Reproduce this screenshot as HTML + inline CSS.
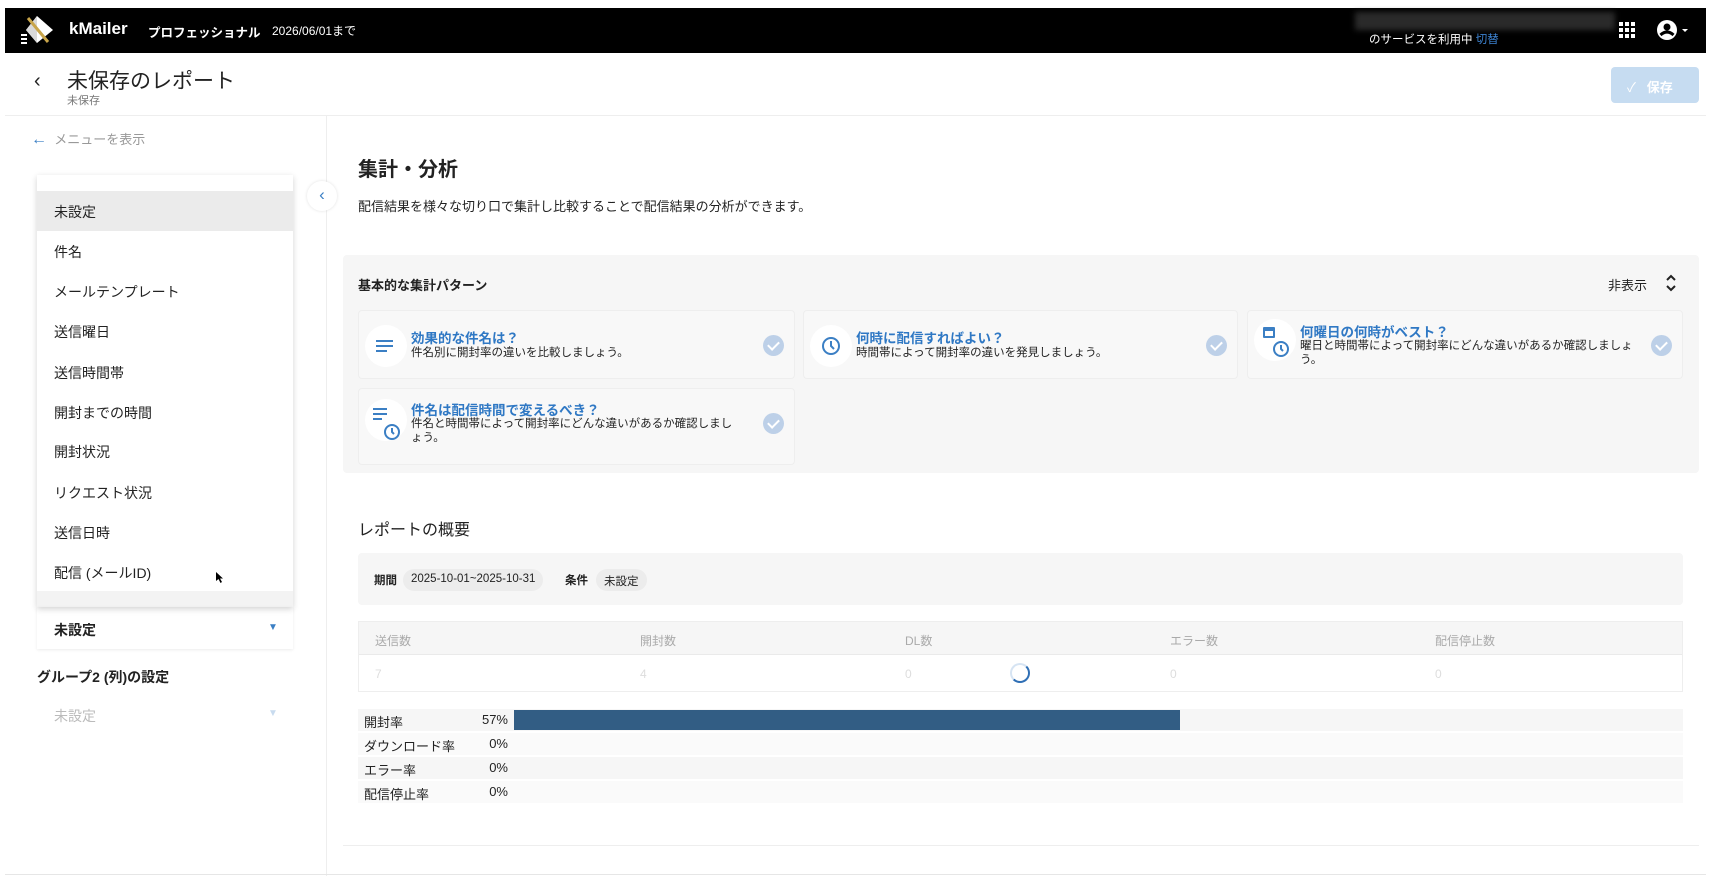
<!DOCTYPE html>
<html><head><meta charset="utf-8">
<style>
*{box-sizing:border-box;margin:0;padding:0}
body{width:1714px;height:880px;overflow:hidden;background:#fff;font-family:"Liberation Sans","Noto Sans CJK JP",sans-serif;color:#222;position:relative}
.a{position:absolute;white-space:nowrap}
.top{left:5px;top:8px;width:1701px;height:45px;background:#000}
.item{left:54px;font-size:14px;color:#222}
.card{background:#f8f8f8;border:1px solid #eee;border-radius:4px;position:absolute}
.ic{position:absolute;left:6px;top:14px;width:42px;height:42px;border-radius:50%;background:#fff}
.ct{position:absolute;left:52px;top:16px;font-size:13.5px;font-weight:bold;color:#2f78c4}
.cd{position:absolute;left:52px;top:35px;font-size:11.5px;color:#222;line-height:14px}
.chk{position:absolute;right:10px;top:24px;width:21px;height:21px;border-radius:50%;background:#bdd0e8}
.chk:after{content:"";position:absolute;left:7px;top:4px;width:5px;height:9px;border:solid #fff;border-width:0 2px 2px 0;transform:rotate(45deg)}
.th{font-size:12px;color:#aaa}
.row{position:absolute;left:358px;width:1325px;height:22px;background:#f6f6f6}
.lab{position:absolute;left:6px;top:3px;font-size:13px}
.pct{position:absolute;right:1175px;top:3px;font-size:13px}
</style></head><body>
<div class="a top"></div>
<svg class="a" style="left:20px;top:14px" width="36" height="32" viewBox="0 0 36 32"><polygon points="17,2 33,16 17,29 6,16" fill="#fff"/><polygon points="17,2 6,16 17,29" fill="#d9d9d9"/><line x1="8" y1="4" x2="28" y2="28" stroke="#c9a54a" stroke-width="3"/><rect x="1" y="20" width="6" height="2" fill="#fff"/><rect x="1" y="24" width="6" height="2" fill="#fff"/><rect x="1" y="28" width="6" height="2" fill="#fff"/></svg>
<div class="a" style="left:69px;top:19px;font-size:17px;font-weight:bold;color:#fff">kMailer</div>
<div class="a" style="left:148px;top:22px;font-size:12.5px;font-weight:bold;color:#fff">プロフェッショナル</div>
<div class="a" style="left:272px;top:22px;font-size:12px;color:#fff">2026/06/01まで</div>
<div class="a" style="left:1355px;top:12px;width:260px;height:18px;background:#2a2a2a;filter:blur(3px)"></div>
<div class="a" style="left:1369px;top:31px;font-size:11.5px;color:#fff">のサービスを利用中 <span style="color:#3d83d1">切替</span></div>
<svg class="a" style="left:1619px;top:22px" width="17" height="17" viewBox="0 0 17 17" fill="#fff"><rect x="0" y="0" width="4" height="4"/><rect x="6" y="0" width="4" height="4"/><rect x="12" y="0" width="4" height="4"/><rect x="0" y="6" width="4" height="4"/><rect x="6" y="6" width="4" height="4"/><rect x="12" y="6" width="4" height="4"/><rect x="0" y="12" width="4" height="4"/><rect x="6" y="12" width="4" height="4"/><rect x="12" y="12" width="4" height="4"/></svg>
<svg class="a" style="left:1656px;top:19px" width="36" height="22" viewBox="0 0 36 22"><circle cx="11" cy="11" r="10" fill="#fff"/><circle cx="11" cy="8" r="3.5" fill="#000"/><path d="M4.5 16 Q11 10 17.5 16" stroke="#000" stroke-width="3" fill="none"/><polygon points="26,10 32,10 29,13" fill="#fff"/></svg>

<div class="a" style="left:34px;top:70px;font-size:20px;color:#222">‹</div>
<div class="a" style="left:67px;top:65px;font-size:21px;color:#222">未保存のレポート</div>
<div class="a" style="left:67px;top:92px;font-size:11px;color:#777">未保存</div>
<div class="a" style="left:1611px;top:67px;width:88px;height:36px;background:#c6dcf1;border-radius:4px;color:#fff;font-size:13px;font-weight:bold;padding:10px 0 0 16px"><span style="font-weight:normal">✓</span> &nbsp;&nbsp;保存</div>
<div class="a" style="left:5px;top:115px;width:1701px;height:1px;background:#eee"></div>

<div class="a" style="left:31px;top:129px;font-size:13px;color:#999"><span style="color:#3b7fc4;font-size:16px">←</span>&nbsp; メニューを表示</div>
<div class="a" style="left:326px;top:116px;width:1px;height:760px;background:#eee"></div>
<div class="a" style="left:307px;top:181px;width:30px;height:30px;border-radius:50%;background:#fff;box-shadow:0 0 3px rgba(0,0,0,.12);color:#3b7fc4;font-size:17px;text-align:center;line-height:28px">‹</div>

<div class="a" style="left:37px;top:175px;width:256px;height:432px;background:#fff;box-shadow:0 2px 6px rgba(0,0,0,.18);overflow:hidden">
<div class="a" style="left:0;top:16px;width:256px;height:40px;background:#ebebeb"></div>
<div class="a" style="left:0;top:416px;width:256px;height:20px;background:#f3f3f3"></div>
</div>
<div class="a item" style="top:202px">未設定</div>
<div class="a item" style="top:242px">件名</div>
<div class="a item" style="top:282px">メールテンプレート</div>
<div class="a item" style="top:322px">送信曜日</div>
<div class="a item" style="top:363px">送信時間帯</div>
<div class="a item" style="top:403px">開封までの時間</div>
<div class="a item" style="top:442px">開封状況</div>
<div class="a item" style="top:483px">リクエスト状況</div>
<div class="a item" style="top:523px">送信日時</div>
<div class="a item" style="top:563px">配信 (メールID)</div>
<svg class="a" style="left:216px;top:572px" width="8" height="12" viewBox="0 0 8 12"><path d="M0 0 L0 9 L2.5 7 L4.5 11 L6 10 L4 6.5 L7 6.5 Z" fill="#000"/></svg>

<div class="a" style="left:37px;top:607px;width:256px;height:42px;box-shadow:0 1px 3px rgba(0,0,0,.08)"></div>
<div class="a" style="left:54px;top:620px;font-size:14px;font-weight:bold">未設定</div>
<div class="a" style="left:268px;top:622px;font-size:10px;color:#3b7fc4">▼</div>
<div class="a" style="left:37px;top:667px;font-size:14px;font-weight:bold">グループ2 (列)の設定</div>
<div class="a" style="left:54px;top:706px;font-size:14px;color:#bbb">未設定</div>
<div class="a" style="left:268px;top:708px;font-size:10px;color:#c8dbef">▼</div>
<div class="a" style="left:5px;top:874px;width:1701px;height:1px;background:#e6e6e6"></div>

<div class="a" style="left:358px;top:153px;font-size:20px;font-weight:bold">集計・分析</div>
<div class="a" style="left:358px;top:196px;font-size:13px">配信結果を様々な切り口で集計し比較することで配信結果の分析ができます。</div>

<div class="a" style="left:343px;top:255px;width:1356px;height:218px;background:#f6f6f6;border-radius:4px"></div>
<div class="a" style="left:358px;top:275px;font-size:13px;font-weight:bold">基本的な集計パターン</div>
<div class="a" style="left:1608px;top:275px;font-size:13px">非表示</div>
<svg class="a" style="left:1665px;top:273px" width="12" height="20" viewBox="0 0 12 20"><path d="M2 7 L6 3 L10 7 M2 13 L6 17 L10 13" stroke="#222" stroke-width="2" fill="none"/></svg>

<div class="card" style="left:358px;top:310px;width:437px;height:69px"><div class="ic"><svg width="42" height="42"><g stroke="#3b7fc4" stroke-width="2"><line x1="11" y1="16" x2="28" y2="16"/><line x1="11" y1="21" x2="28" y2="21"/><line x1="11" y1="26" x2="22" y2="26"/></g></svg></div><div class="ct">効果的な件名は？</div><div class="cd">件名別に開封率の違いを比較しましょう。</div><div class="chk"></div></div>
<div class="card" style="left:803px;top:310px;width:435px;height:69px"><div class="ic"><svg width="42" height="42"><circle cx="21" cy="21" r="8" stroke="#3b7fc4" stroke-width="2" fill="none"/><path d="M21 16v5l3 3" stroke="#3b7fc4" stroke-width="2" fill="none"/></svg></div><div class="ct">何時に配信すればよい？</div><div class="cd">時間帯によって開封率の違いを発見しましょう。</div><div class="chk"></div></div>
<div class="card" style="left:1247px;top:310px;width:436px;height:69px"><div class="ic" style="top:8px"><svg width="42" height="50"><rect x="9" y="8" width="12" height="11" rx="1" fill="#3b7fc4"/><rect x="11" y="12" width="8" height="5" fill="#fff"/><circle cx="27" cy="30" r="7" stroke="#3b7fc4" stroke-width="2" fill="none"/><path d="M27 26v4l2 2" stroke="#3b7fc4" stroke-width="2" fill="none"/></svg></div><div class="ct" style="top:10px">何曜日の何時がベスト？</div><div class="cd" style="top:28px">曜日と時間帯によって開封率にどんな違いがあるか確認しましょ<br>う。</div><div class="chk"></div></div>
<div class="card" style="left:358px;top:388px;width:437px;height:77px"><div class="ic" style="top:10px"><svg width="42" height="50"><g stroke="#3b7fc4" stroke-width="2"><line x1="8" y1="10" x2="22" y2="10"/><line x1="8" y1="15" x2="22" y2="15"/><line x1="8" y1="20" x2="17" y2="20"/></g><circle cx="27" cy="33" r="7" stroke="#3b7fc4" stroke-width="2" fill="none"/><path d="M27 29v4l2 2" stroke="#3b7fc4" stroke-width="2" fill="none"/></svg></div><div class="ct" style="top:10px">件名は配信時間で変えるべき？</div><div class="cd" style="top:28px">件名と時間帯によって開封率にどんな違いがあるか確認しまし<br>ょう。</div><div class="chk"></div></div>

<div class="a" style="left:358px;top:516px;font-size:16px">レポートの概要</div>
<div class="a" style="left:358px;top:553px;width:1325px;height:52px;background:#f6f6f6;border-radius:4px"></div>
<div class="a" style="left:374px;top:572px;font-size:11.5px;font-weight:bold">期間</div>
<div class="a" style="left:403px;top:569px;height:22px;padding:4px 8px;background:#ececec;border-radius:11px;font-size:11.5px">2025-10-01~2025-10-31</div>
<div class="a" style="left:565px;top:572px;font-size:11.5px;font-weight:bold">条件</div>
<div class="a" style="left:596px;top:569px;height:22px;padding:4px 8px;background:#ececec;border-radius:11px;font-size:11.5px">未設定</div>

<div class="a" style="left:358px;top:621px;width:1325px;height:71px;border:1px solid #eee"></div>
<div class="a" style="left:359px;top:622px;width:1323px;height:33px;background:#f6f6f6;border-bottom:1px solid #eaeaea"></div>
<div class="a th" style="left:375px;top:632px">送信数</div><div class="a th" style="left:640px;top:632px">開封数</div><div class="a th" style="left:905px;top:632px">DL数</div><div class="a th" style="left:1170px;top:632px">エラー数</div><div class="a th" style="left:1435px;top:632px">配信停止数</div>
<div class="a th" style="left:375px;top:667px;color:#ddd">7</div><div class="a th" style="left:640px;top:667px;color:#ddd">4</div><div class="a th" style="left:905px;top:667px;color:#ddd">0</div><div class="a th" style="left:1170px;top:667px;color:#ddd">0</div><div class="a th" style="left:1435px;top:667px;color:#ddd">0</div>
<div class="a" style="left:1010px;top:663px;width:20px;height:20px;border-radius:50%;border:2px solid #d6e4f3;border-bottom-color:#2f6fb5;border-right-color:#2f6fb5"></div>

<div class="row" style="top:709px"><span class="lab">開封率</span><span class="pct">57%</span><div style="position:absolute;left:156px;top:1px;width:666px;height:20px;background:#325d84"></div></div>
<div class="row" style="top:733px;background:#fafafa"><span class="lab">ダウンロード率</span><span class="pct">0%</span></div>
<div class="row" style="top:757px"><span class="lab">エラー率</span><span class="pct">0%</span></div>
<div class="row" style="top:781px;background:#fafafa"><span class="lab">配信停止率</span><span class="pct">0%</span></div>
<div class="a" style="left:343px;top:845px;width:1356px;height:1px;background:#eee"></div>
</body></html>
